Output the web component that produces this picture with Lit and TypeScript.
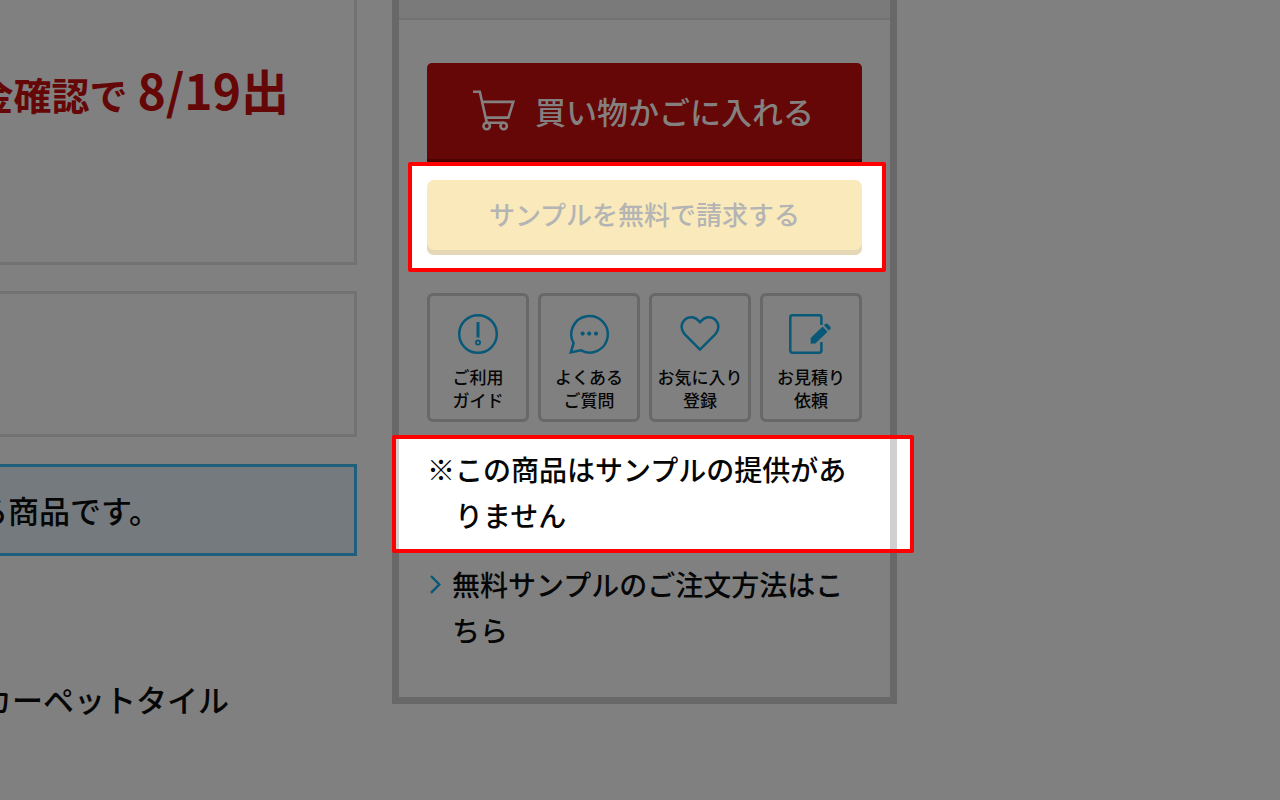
import { LitElement, html, css, svg } from "lit";
import { customElement } from "lit/decorators.js";

const icons = {
  guide: svg`<circle cx="22" cy="22" r="18.8"/><path d="M22 10v15.5" stroke-width="3"/><circle cx="22" cy="30.6" r="2.1" stroke-width="1.8"/>`,
  faq: svg`<path d="M6.6 31.2A18.3 18.3 0 1 1 13.6 38.2L3.8 40.4Z"/><g fill="currentColor" stroke="none"><circle cx="15.6" cy="21.6" r="2.1"/><circle cx="22.2" cy="21.6" r="2.1"/><circle cx="29" cy="21.6" r="2.1"/></g>`,
  favorite: svg`<path d="M22 37.6 6.6 22.2C2.8 18.2 2.6 12 6.4 8.2C10.3 4.3 16.4 4.5 20.2 8.3L22 10.2 23.8 8.3C27.6 4.5 33.7 4.3 37.6 8.2C41.4 12 41.2 18.2 37.4 22.2Z"/>`,
  estimate: svg`<path d="M32.4 13V5.5Q32.4 3.3 30.2 3.3H3.5Q1.3 3.3 1.3 5.5V38.5Q1.3 40.7 3.5 40.7H30.2Q32.4 40.7 32.4 38.5V30"/><g fill="currentColor" stroke="none"><path d="M21.7 26 33.6 14.6 38.6 19.8 26.7 31.2Q26.3 31.5 25.7 31.5L21.7 31.8Z"/><path d="M34.9 13.3 36.3 12Q37.6 10.9 38.9 12.2L41.3 14.7Q42.5 16.1 41.2 17.3L39.8 18.6Z"/></g>`,
};

const shortcuts = [
  { icon: icons.guide, lines: ["ご利用", "ガイド"] },
  { icon: icons.faq, lines: ["よくある", "ご質問"] },
  { icon: icons.favorite, lines: ["お気に入り", "登録"] },
  { icon: icons.estimate, lines: ["お見積り", "依頼"] },
];

@customElement("app-root")
export class AppRoot extends LitElement {
  static styles = css`
    :host {
      display: block;
      font-family: "Noto Sans CJK JP", "Noto Sans", sans-serif;
      font-weight: 500;
      color: #060606;
    }
    * {
      box-sizing: border-box;
    }
    p {
      margin: 0;
    }
    a {
      color: inherit;
      text-decoration: none;
    }
    button {
      display: flex;
      align-items: center;
      justify-content: center;
      width: 100%;
      border: 0;
      padding: 0;
      font: inherit;
    }
    .page {
      display: grid;
      grid-template-columns: minmax(0, 357fr) minmax(0, 505fr) minmax(0, 348fr);
      column-gap: 35px;
      align-items: start;
      min-height: 100vh;
      background: #808080;
      overflow: hidden;
    }
    .info {
      display: flex;
      flex-direction: column;
    }
    .card {
      display: flex;
      justify-content: flex-end;
      border: 3px solid #727272;
      border-left: 0;
      white-space: nowrap;
    }
    .shipping {
      align-items: baseline;
      gap: 10px;
      border-top: 0;
      padding: 53px 65px 132px 0;
      color: #650707;
      font-weight: 700;
      font-size: 38px;
      line-height: 72px;
    }
    .date {
      font-size: 48px;
    }
    .blank {
      min-height: 146px;
      margin-top: 26px;
    }
    .notice {
      margin-top: 27px;
      padding: 20px 194px 20px 0;
      border-color: #1f5f7b;
      background: #747a7e;
      font-size: 31px;
      line-height: 46px;
    }
    .category {
      display: flex;
      justify-content: flex-end;
      margin-top: 120px;
      padding-right: 128px;
      font-size: 31px;
      line-height: 46px;
      white-space: nowrap;
    }
    .panel {
      border: 7px solid #686868;
      border-top: 0;
    }
    .strip {
      height: 20px;
      border-bottom: 2px solid #727272;
      background: #7a7a7a;
    }
    .actions {
      padding: 43px 28px;
    }
    .cart {
      gap: 20px;
      height: 99px;
      padding: 0 2px 5px 0;
      border-radius: 5px 5px 0 0;
      background: #650707;
      box-shadow: inset 0 -3px #4a0202;
      color: #848080;
      font-size: 31px;
    }
    .cart-icon {
      width: 42px;
      height: 42px;
    }
    .focus {
      position: relative;
      border: 4px solid #ff0000;
      border-radius: 2px;
      background: #fff;
    }
    .focus-sample {
      margin: 0 -24px 21px -19px;
      padding: 14px 20px 13px 15px;
    }
    .sample {
      height: 75px;
      padding-bottom: 8px;
      border-radius: 7px;
      background: #faeabb;
      box-shadow: inset 0 -5px #e4d8b6;
      color: #b4b4b4;
      font-size: 26px;
    }
    .shortcuts {
      display: grid;
      grid-template-columns: repeat(4, minmax(0, 1fr));
      gap: 9px;
    }
    .shortcut {
      display: flex;
      flex-direction: column;
      align-items: center;
      gap: 9px;
      padding: 16px 0 8px;
      border: 3px solid #686868;
      border-radius: 6px;
      font-size: 17px;
      line-height: 23px;
      text-align: center;
      white-space: nowrap;
    }
    .shortcut-icon {
      width: 44px;
      height: 44px;
      color: #085878;
      overflow: visible;
    }
    .line {
      display: block;
    }
    .focus-note {
      margin: 13px -52px 8px -35px;
      padding: 7px 48px 11px 31px;
      background: linear-gradient(
        to right,
        #d0d0d0 3px,
        #fff 3px,
        #fff calc(100% - 20px),
        #d0d0d0 calc(100% - 20px),
        #d0d0d0 calc(100% - 13px),
        #fff calc(100% - 13px)
      );
    }
    .note,
    .howto {
      display: flex;
      font-size: 28px;
      line-height: 46px;
    }
    .mark {
      font-weight: 400;
    }
    .howto {
      gap: 10px;
      padding-bottom: 1px;
    }
    .chevron {
      flex: none;
      width: 15px;
      height: 46px;
      color: #085878;
    }
  `;

  render() {
    return html`
      <main class="page">
        <section class="info">
          <p class="card shipping"><span>金確認で</span><span class="date">8/19出</span></p>
          <div class="card blank"></div>
          <p class="card notice">る商品です。</p>
          <p class="category">カーペットタイル</p>
        </section>
        <aside class="panel">
          <div class="strip"></div>
          <div class="actions">
            <button class="cart" type="button">
              <svg class="cart-icon" viewBox="0 0 42 42" fill="none" stroke="currentColor" stroke-width="2.6" aria-hidden="true">
                <path d="M0 2.8H6.8L13.8 33.6M8.8 12.9H40.3L35.4 28.6H12.6M13.8 33.7H31"/>
                <circle cx="13.7" cy="37" r="3.2"/>
                <circle cx="30.7" cy="37" r="3.2"/>
              </svg>
              <span>買い物かごに入れる</span>
            </button>
            <div class="focus focus-sample">
              <button class="sample" type="button" disabled>サンプルを無料で請求する</button>
            </div>
            <nav class="shortcuts">
              ${shortcuts.map(
                (s) => html`<a class="shortcut" href="#">
                  <svg class="shortcut-icon" viewBox="0 0 44 44" fill="none" stroke="currentColor" stroke-width="2.5" aria-hidden="true">${s.icon}</svg>
                  <span>${s.lines.map((l) => html`<span class="line">${l}</span>`)}</span>
                </a>`
              )}
            </nav>
            <div class="focus focus-note">
              <p class="note"><span class="mark">※</span><span>この商品はサンプルの提供がありません</span></p>
            </div>
            <a class="howto" href="#">
              <svg class="chevron" viewBox="0 0 15 46" fill="none" stroke="currentColor" stroke-width="2.4" aria-hidden="true">
                <path d="M4 15 12.3 23.4 4 31.8"/>
              </svg>
              <span>無料サンプルのご注文方法はこちら</span>
            </a>
          </div>
        </aside>
      </main>
    `;
  }
}
